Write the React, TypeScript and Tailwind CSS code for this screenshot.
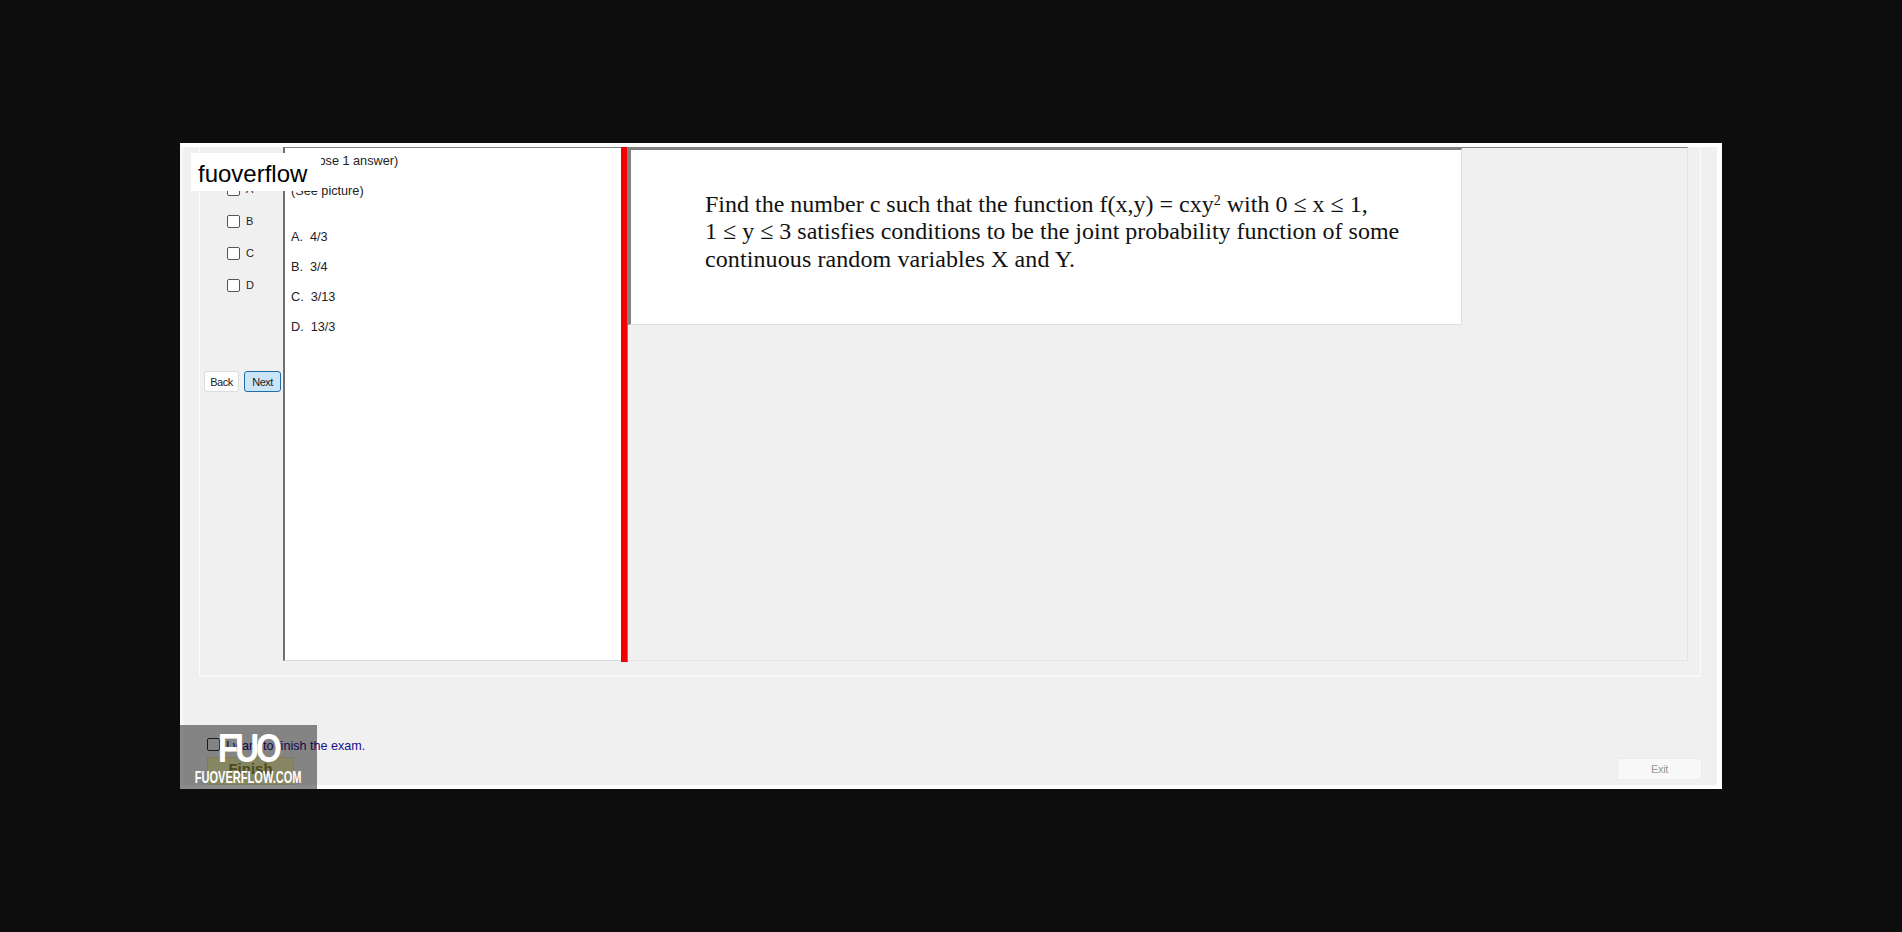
import React from 'react';

const options = ['A', 'B', 'C', 'D'];
const answers = ['A.  4/3', 'B.  3/4', 'C.  3/13', 'D.  13/3'];

function OptionRow({ label }: { label: string }) {
    return (
        <div className="flex h-[14px] items-center gap-[6px] pl-[27px] text-[11px] leading-none text-[#222]">
            <input type="checkbox" className="h-[13px] w-[13px] appearance-none rounded-[2px] border border-[#555] bg-white" />
            <span>{label}</span>
        </div>
    );
}

function AnswerPanel() {
    return (
        <div className="flex h-full w-[338px] flex-col border-t border-b border-l-2 border-t-[#808080] border-b-[#d8d8d8] border-l-[#707070] bg-white pl-[6px] text-[12.7px] leading-[14px] text-[#222]">
            <div className="mt-[6px] h-[14px]">(Choose 1 answer)</div>
            <div className="mt-[16px] h-[14px]">(See picture)</div>
            <div className="mt-[32px] flex flex-col gap-[16px]">
                {answers.map((a) => (
                    <div key={a} className="h-[14px] whitespace-pre">{a}</div>
                ))}
            </div>
        </div>
    );
}

function QuestionPanel() {
    return (
        <div className="h-full w-[1060px] border-t border-r border-b border-t-[#808080] border-r-[#e4e4e4] border-b-[#e4e4e4] bg-[#f0f0f0]">
            <div className="h-[177px] w-[834px] border-t-2 border-r border-b border-l-[3px] border-t-[#808080] border-r-[#e0e0e0] border-b-[#e0e0e0] border-l-[#808080] bg-white pt-[33px] pl-[74px] font-['Liberation_Serif',serif] text-[24px] leading-[27.4px] text-[#111]">
                <div className="mt-[8px] whitespace-nowrap">
                    Find the number c such that the function f(x,y) = cxy<sup className="text-[14px] leading-none">2</sup> with 0 ≤ x ≤ 1,
                </div>
                <div className="whitespace-nowrap">1 ≤ y ≤ 3 satisfies conditions to be the joint probability function of some</div>
                <div className="whitespace-nowrap tracking-[0.1px]">continuous random variables X and Y.</div>
            </div>
        </div>
    );
}

export default function App() {
    return (
        <div className="flex min-h-screen items-center justify-center bg-[#0d0d0d] font-['Liberation_Sans',sans-serif]">
            <div className="relative flex h-[646px] w-[1542px] flex-col border-t-4 border-r-[5px] border-b-4 border-l-[3px] border-t-white border-r-white border-b-white border-l-[#f8f8f8] bg-[#f0f0f0]">
                {/* Exam group box */}
                <div className="ml-[16px] flex h-[530px] w-[1502px] border-r border-b-2 border-l border-r-[#fafafa] border-b-[#fafafa] border-l-[#fafafa] pb-[14px]">
                    <div className="flex w-[83px] flex-col">
                        <div className="mt-[35px] flex flex-col gap-[18px]">
                            {options.map((o) => (
                                <OptionRow key={o} label={o} />
                            ))}
                        </div>
                        <div className="mt-[79px] flex gap-[5px] pl-[4px] text-[11px] tracking-[-0.5px] text-[#222]">
                            <button className="h-[21px] w-[35px] rounded-[3px] border border-[#dcdcdc] bg-white pt-[1px]">Back</button>
                            <button className="h-[21px] w-[37px] rounded-[3px] border border-[#1a6fa8] bg-[#cce4f7] pt-[1px]">Next</button>
                        </div>
                    </div>
                    <AnswerPanel />
                    {/* Splitter */}
                    <div className="h-[515px] w-[7px] border-r border-r-[#808080] bg-[#f00000]" />
                    <QuestionPanel />
                </div>

                {/* Footer */}
                <div className="flex flex-1 items-end justify-between pr-[15px] pl-[24px]">
                    <div className="flex flex-col gap-[4px]">
                        <div className="flex items-start gap-[6px] text-[12.6px] leading-none text-[#1a0f8c]">
                            <input type="checkbox" className="h-[13px] w-[13px] appearance-none rounded-[2px] border border-[#333] bg-[#f0f0f0]" />
                            <span className="pt-[2px]">I want to finish the exam.</span>
                        </div>
                        <button className="h-[28px] w-[87px] border border-[#e8e0b0] bg-[#f4f4b4] pb-[6px] text-[15px] leading-none font-bold text-[#8a8a30]">Finish</button>
                    </div>
                    <button className="mb-[5px] h-[22px] w-[85px] rounded-[2px] border border-[#ededed] bg-[#f8f8f8] text-[11px] tracking-[-0.3px] text-[#999]">Exit</button>
                </div>

                {/* Site watermarks */}
                <div className="absolute top-[6px] left-[8px] bg-white pt-[5px] pr-[14px] pb-[1px] pl-[7px] text-[24px] leading-[32px] text-black">fuoverflow</div>
                <div className="absolute bottom-[-4px] left-[-3px] flex h-[64px] w-[137px] flex-col items-center bg-black/45 text-white">
                    <div className="mt-[5px] origin-center scale-x-[0.84] text-[40px] leading-[37px] font-bold tracking-[-4px]">FUO</div>
                    <div className="mt-[1px] origin-center scale-x-[0.65] text-[17px] leading-[20px] font-bold whitespace-nowrap">FUOVERFLOW.COM</div>
                </div>
            </div>
        </div>
    );
}
